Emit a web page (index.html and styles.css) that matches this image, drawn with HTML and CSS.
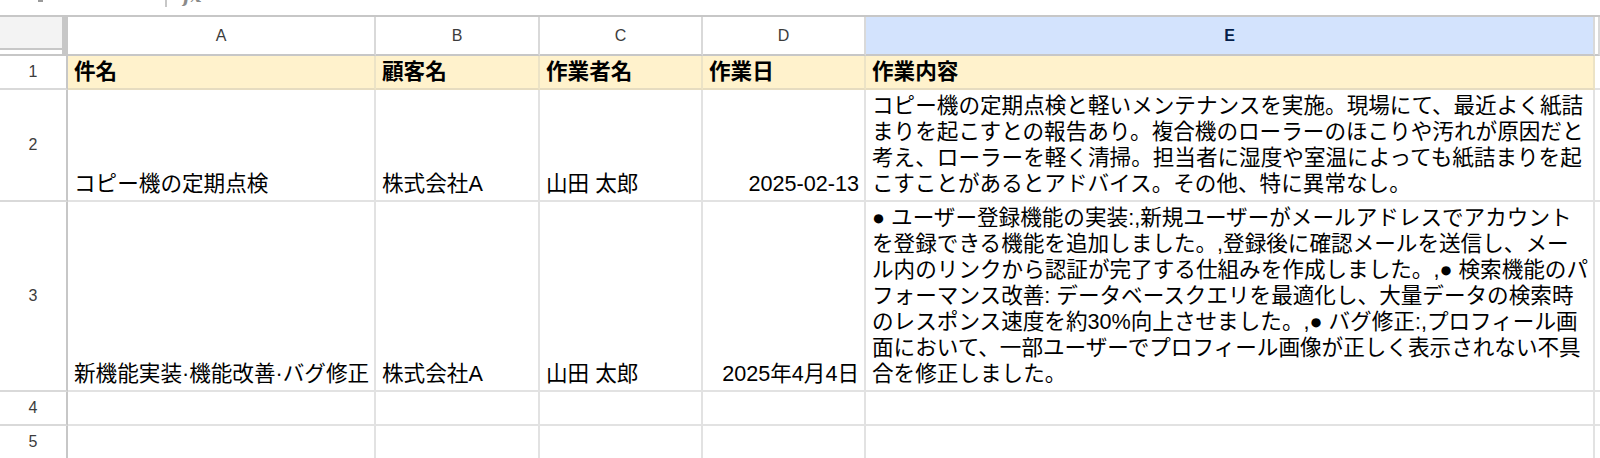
FILE: index.html
```html
<!DOCTYPE html>
<html lang="ja">
<head>
<meta charset="utf-8">
<title>Sheet</title>
<link rel="stylesheet" href="styles.css">
</head>
<body>
<div class="topbar"><span class="tb-caret"></span><span class="tb-sep"></span><span class="tb-fx">fx</span></div>
<div class="sheet">
  <div class="corner"><div class="corner-box"></div></div>
  <div class="ch">A</div>
  <div class="ch">B</div>
  <div class="ch">C</div>
  <div class="ch">D</div>
  <div class="ch ch-sel">E</div>
  <div class="ch"></div>

  <div class="rh">1</div>
  <div class="c hd">件名</div>
  <div class="c hd">顧客名</div>
  <div class="c hd">作業者名</div>
  <div class="c hd">作業日</div>
  <div class="c hd">作業内容</div>
  <div class="c"></div>

  <div class="rh">2</div>
  <div class="c">コピー機の定期点検</div>
  <div class="c">株式会社A</div>
  <div class="c">山田 太郎</div>
  <div class="c r">2025-02-13</div>
  <div class="c"><div>コピー機の定期点検と軽いメンテナンスを実施。現場にて、最近よく紙詰<br>まりを起こすとの報告あり。複合機のローラーのほこりや汚れが原因だと<br>考え、ローラーを軽く清掃。担当者に湿度や室温によっても紙詰まりを起<br>こすことがあるとアドバイス。その他、特に異常なし。</div></div>
  <div class="c"></div>

  <div class="rh">3</div>
  <div class="c">新機能実装·機能改善·バグ修正</div>
  <div class="c">株式会社A</div>
  <div class="c">山田 太郎</div>
  <div class="c r">2025年4月4日</div>
  <div class="c"><div>● ユーザー登録機能の実装:,新規ユーザーがメールアドレスでアカウント<br>を登録できる機能を追加しました。,登録後に確認メールを送信し、メー<br>ル内のリンクから認証が完了する仕組みを作成しました。,● 検索機能のパ<br>フォーマンス改善: データベースクエリを最適化し、大量データの検索時<br>のレスポンス速度を約30%向上させました。,● バグ修正:,プロフィール画<br>面において、一部ユーザーでプロフィール画像が正しく表示されない不具<br>合を修正しました。</div></div>
  <div class="c"></div>

  <div class="rh">4</div>
  <div class="c"></div>
  <div class="c"></div>
  <div class="c"></div>
  <div class="c"></div>
  <div class="c"></div>
  <div class="c"></div>

  <div class="rh">5</div>
  <div class="c"></div>
  <div class="c"></div>
  <div class="c"></div>
  <div class="c"></div>
  <div class="c"></div>
  <div class="c"></div>
</div>
</body>
</html>
```

FILE: styles.css
```css
html, body {
  margin: 0;
  padding: 0;
  background: #ffffff;
}

body {
  font-family: "Liberation Sans", "Noto Sans CJK JP", sans-serif;
  overflow: hidden;
}

.topbar {
  height: 15px;
  border-bottom: 2px solid #c7c7c7;
  display: flex;
  align-items: flex-start;
  overflow: hidden;
}

.tb-caret {
  margin-left: 38px;
  width: 5px;
  height: 2px;
  background: #9a9a9a;
}

.tb-sep {
  margin-left: 122px;
  width: 2px;
  height: 7px;
  background: #c7c7c7;
}

.tb-fx {
  margin-left: 16px;
  margin-top: -13px;
  font: italic bold 18px/18px "DejaVu Serif", serif;
  color: #8a8a8a;
}

.sheet {
  display: grid;
  grid-template-columns: 68px 308px 164px 163px 163px 729px 5px;
  grid-template-rows: 39px 34px 112px 190px 34px 34px;
}

.sheet > div {
  box-sizing: border-box;
  min-width: 0;
  overflow: hidden;
  border-right: 2px solid #e2e2e2;
  border-bottom: 2px solid #e2e2e2;
}

.sheet > .corner {
  display: flex;
  align-items: flex-start;
  border-right: 6px solid #c7c7c7;
  border-bottom: 2px solid #c7c7c7;
}

.corner-box {
  width: 62px;
  height: 31px;
  background: #f3f3f3;
  border-bottom: 2px solid #c7c7c7;
}

.sheet > .ch {
  display: flex;
  align-items: center;
  justify-content: center;
  font-size: 16px;
  color: #3c3c3c;
  border-right-color: #d9d9d9;
  border-bottom-color: #c7c7c7;
}

.sheet > .ch-sel {
  background: #d3e3fd;
  color: #041e49;
  font-weight: bold;
}

.sheet > .rh {
  display: flex;
  align-items: center;
  justify-content: center;
  font-size: 16px;
  color: #3c3c3c;
  border-right-color: #c7c7c7;
  border-bottom-color: #d9d9d9;
}

.c {
  display: flex;
  align-items: flex-end;
  padding: 0 6px 3px 6px;
  font-size: 21.6px;
  line-height: 26px;
  color: #000000;
  white-space: nowrap;
}

.hd {
  background: #fff2cc;
  font-weight: bold;
}

.sheet > .hd {
  border-bottom-color: #e6dcc0;
  border-right-color: #ece3c6;
}

.r {
  justify-content: flex-end;
  padding-right: 5px;
}
```
